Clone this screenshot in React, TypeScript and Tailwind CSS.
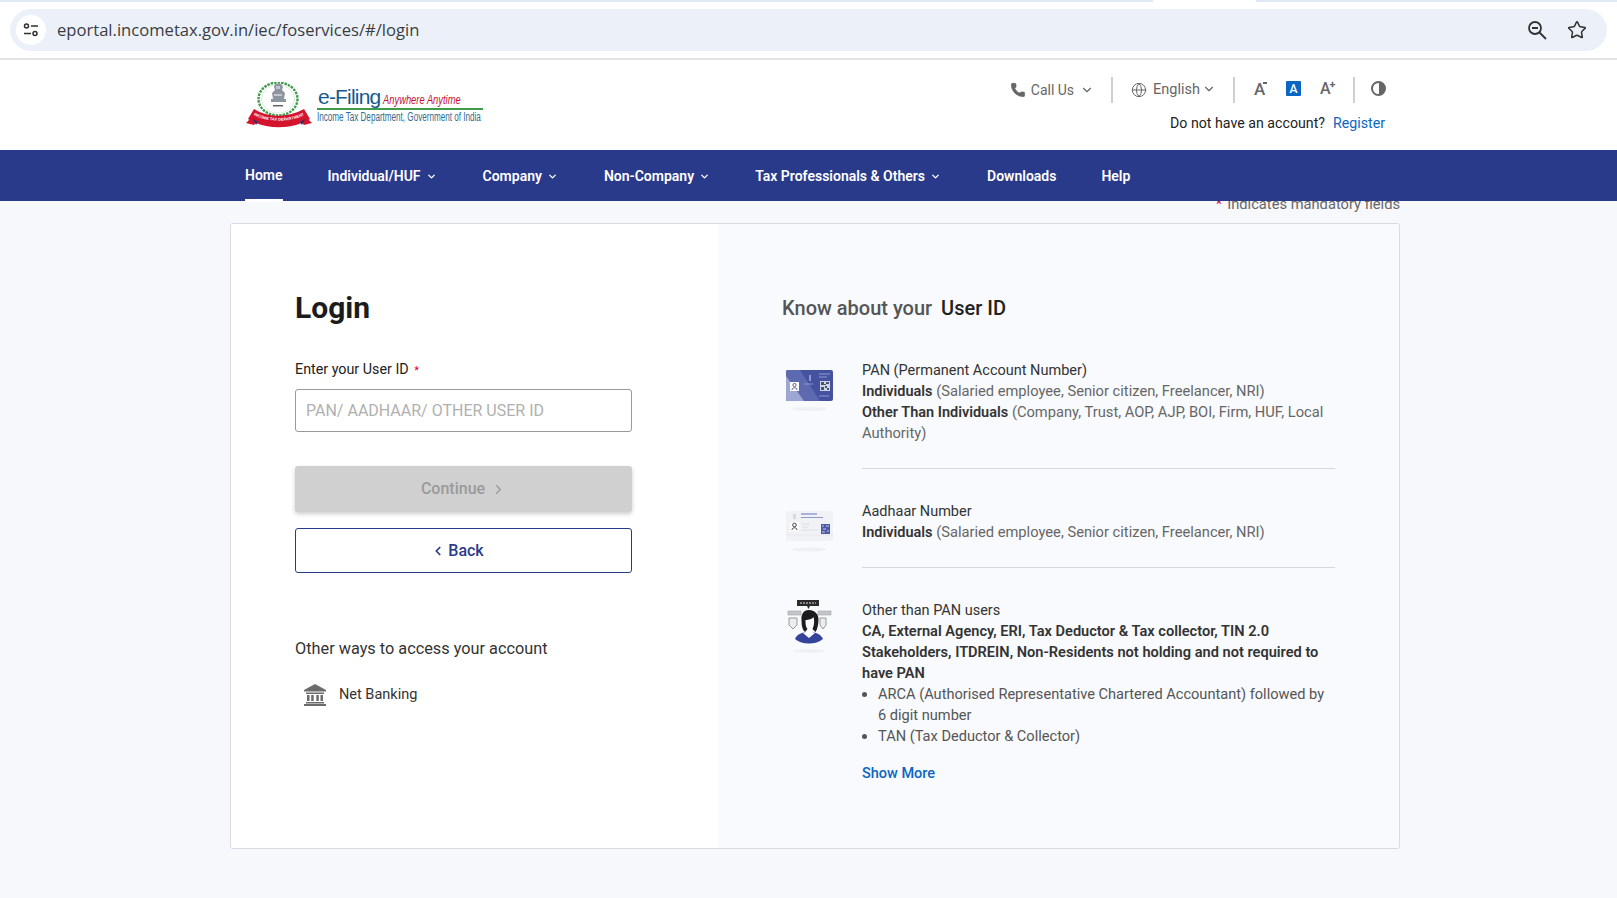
import { ChevronDown, ChevronLeft, ChevronRight, Globe, Phone, Star } from "lucide-react";

const NAV = [
  { label: "Home", active: true, cls: "ml-[245px]" },
  { label: "Individual/HUF", menu: true, cls: "ml-[45px]" },
  { label: "Company", menu: true, cls: "ml-[46px]" },
  { label: "Non-Company", menu: true, cls: "ml-[46px]" },
  { label: "Tax Professionals & Others", menu: true, cls: "ml-[45px]" },
  { label: "Downloads", cls: "ml-[46px]" },
  { label: "Help", cls: "ml-[45px]" },
];

function Emblem() {
  return (
    <svg width="66" height="46" viewBox="0 0 66 46">
      <ellipse cx="32" cy="17" rx="19.500" ry="16.500" fill="none" stroke="#3f9a4a" strokeWidth="2.400" strokeDasharray="2.500 1" />
      <ellipse cx="32" cy="17" rx="16.500" ry="14" fill="none" stroke="#bfe0c4" strokeWidth="0.600" />
      <path d="M29 2h6l2 3-1 3 3 3-1 6h2v3H25v-3h2l-1-6 3-3-1-3z" fill="#8d96a0" />
      <path d="M30 4h4v3h-4zM28 12h8v2h-8z" fill="#c3c8ce" />
      <path d="M27 23h10v1.500H27z" fill="#666" />
      <path d="M8 27c14 9 34 9 50 0l6 10c-18 11-44 11-62 0z" fill="#d4142d" />
      <path d="M0 41l6-6 5 4-3 4zM66 41l-6-6-5 4 3 4z" fill="#d4142d" />
      <path d="M7 37l5 3-2 3zM59 37l-5 3 2 3z" fill="#2d2f6d" />
      <path id="ribbon" d="M6 32c14 9 40 9 54 0" fill="none" />
      <text fontSize="3.900" fontWeight="700" fill="#fff" fontFamily="Liberation Sans, sans-serif" textAnchor="middle">
        <textPath href="#ribbon" startOffset="50%">INCOME TAX DEPARTMENT</textPath>
      </text>
    </svg>
  );
}

function Logo() {
  return (
    <div className="flex items-start">
      <Emblem />
      <div className="ml-[5px] w-[166px]">
        <div className="flex h-[26px] items-end pl-[1px] font-['Liberation_Sans',sans-serif] whitespace-nowrap">
          <span className="-mb-[2px] text-[21px] leading-[26px] tracking-[-0.8px] text-[#155a8f]">e-Filing</span>
          <span className="ml-[3px] -mb-[3px] origin-left scale-x-[0.72] text-[13px] leading-[23px] italic text-[#c8102e]">Anywhere Anytime</span>
        </div>
        <div className="relative h-[2px] bg-[#3f9a4a]"></div>
        <div className="h-[16px] origin-left -mt-[1px] scale-x-[0.675] whitespace-nowrap font-['Liberation_Sans',sans-serif] text-[12px] leading-[16px] text-[#2f6c8f]">
          Income Tax Department, Government of India
        </div>
      </div>
    </div>
  );
}

function PanCard() {
  return (
    <svg width="47" height="42" viewBox="0 0 47 42">
      <rect x="0" y="0" width="47" height="31" rx="2" fill="#44529f" />
      <path d="M2 0h12l20 31H2a2 2 0 0 1-2-2V2a2 2 0 0 1 2-2z" fill="#5e6ab0" />
      <path d="M0 6l18 25H2a2 2 0 0 1-2-2z" fill="#9ea6d4" />
      <rect x="4" y="12" width="9" height="9" fill="#fff" />
      <circle cx="8.500" cy="15" r="1.600" fill="none" stroke="#333a6b" strokeWidth="0.800" />
      <path d="M6 20c0-3 5-3 5 0" fill="none" stroke="#333a6b" strokeWidth="0.800" />
      <rect x="34" y="11" width="10" height="10" fill="#cfd3e6" />
      <path d="M35 12h3v3h-3zM40 12h3v2h-3zM35 17h3v3h-3zM39 16h2v2h-2zM41 18h2v2h-2zM38 14h2v1h-2z" fill="#4a5272" />
      <path d="M33 4h11M33 7h8M33 26h10M18 14h9" stroke="#8f98d2" />
      <path d="M23 5h2v6h-2z" fill="#8f98d2" />
      <ellipse cx="23.500" cy="39" rx="17" ry="2" fill="#eef0f4" />
    </svg>
  );
}

function AadhaarCard() {
  return (
    <svg width="47" height="42" viewBox="0 0 47 42">
      <rect x="0" y="0" width="47" height="30" rx="2" fill="#f1f2f6" />
      <path d="M0 24h47" stroke="#e6e7ec" />
      <rect x="4" y="11" width="9" height="9" fill="#fff" />
      <circle cx="8.500" cy="14" r="1.800" fill="none" stroke="#444" />
      <path d="M6 19c0-3 5-3 5 0" fill="none" stroke="#444" />
      <path d="M15 3h16" stroke="#7c85c4" strokeWidth="1.200" />
      <path d="M15 6.500h22" stroke="#8f97cf" />
      <path d="M16 13h8M16 16h6M16 19h16" stroke="#dcdee6" />
      <rect x="35" y="13" width="9" height="10" fill="#4d5aa6" />
      <path d="M36 15h2M40 15h3M37 18h3M41 20h2M36 21h3" stroke="#c6cbe8" />
      <rect x="7" y="3" width="3" height="5" fill="#d6d8df" />
      <ellipse cx="23.500" cy="38.500" rx="17" ry="2" fill="#eef0f4" />
    </svg>
  );
}

function PersonIcon() {
  return (
    <svg width="47" height="53" viewBox="0 0 47 53">
      <rect x="11" y="0" width="22" height="6" fill="#2b2b2b" />
      <path d="M14 3h16" stroke="#ddd" strokeDasharray="2 1" />
      <path d="M21 6l1.500 3 1.500-3z" fill="#2b2b2b" />
      <rect x="2" y="11" width="13" height="4" fill="#c4c6ca" stroke="#999" strokeWidth="0.500" />
      <rect x="32" y="11" width="13" height="4" fill="#c4c6ca" stroke="#999" strokeWidth="0.500" />
      <path d="M3 18h8v7l-4 4-4-4zM34 18h6v7l-3 4-3-4z" fill="#eceded" stroke="#9a9a9a" />
      <path d="M9 39c2-5 7-6 11-7h6c4 1 9 2 11 7-7 6-21 6-28 0z" fill="#35449b" />
      <path d="M20 28h6v4l3 1-6 5-6-5 3-1z" fill="#fff" />
      <path d="M23 10c-6 0-8 5-7.500 10 0 6 1 10 3.500 12l2.500-3c-2-2-2-6-2-9 3 0 7-1 8-3 1 3 1 8-1 12l3 3c2-3 3-8 3-13 0-5-4-9-9.500-9z" fill="#1c1c1c" />
      <ellipse cx="23" cy="51" rx="16" ry="1.800" fill="#eef0f4" />
    </svg>
  );
}

function BankIcon() {
  return (
    <svg width="22" height="22" viewBox="0 0 22 22" fill="#6b6b6b">
      <path d="M11 0L0 6v1.500h22V6z" />
      <path d="M2 8.500h18v1.500H2zM3 11h2.500v6H3zM7.200 11h2.500v6H7.200zM12.300 11h2.500v6h-2.500zM16.500 11H19v6h-2.500zM2 18h18v1.500H2zM0 20h22v2H0z" />
    </svg>
  );
}

export default function App() {
  return (
    <div className="h-[898px] overflow-hidden bg-[#f6f8fc] font-['Roboto',sans-serif]">
      {/* BROWSER BAR */}
      <div className="h-[60px] border-b-2 border-[#e3e3e3] bg-white">
        <div className="flex h-[2px] bg-[#dfe9f6]">
          <div className="ml-[1153px] w-[103px] bg-white"></div>
        </div>
        <div className="mx-[10px] mt-[7px] flex h-[42px] w-[1597px] items-center rounded-full bg-[#ecf1f9] pl-[6px] pr-[20px]">
          <div className="flex h-[30px] w-[30px] items-center justify-center rounded-full bg-white">
            <svg width="16" height="14" viewBox="0 0 16 14" fill="none" stroke="#303030" strokeWidth="1.500">
              <circle cx="3.500" cy="3" r="2" />
              <path d="M8 3h7M1 10.500h7" />
              <circle cx="12" cy="10.500" r="2" />
            </svg>
          </div>
          <span className="ml-[11px] font-['Open_Sans',sans-serif] text-[16.600px] text-[#3a3d42]">eportal.incometax.gov.in/iec/foservices/#/login</span>
          <div className="ml-auto flex items-center gap-[20px]">
            <svg width="20" height="20" viewBox="0 0 20 20" fill="none" stroke="#333" strokeWidth="1.800">
              <circle cx="8" cy="8" r="6" />
              <path d="M12.500 12.500L19 19M5 8h6" />
            </svg>
            <Star size={20} color="#333" strokeWidth={1.800} />
          </div>
        </div>
      </div>

      {/* HEADER */}
      <div className="flex h-[90px] bg-white pt-[22px]">
        <div className="ml-[246px]">
          <Logo />
        </div>
        <div className="ml-auto mr-[231px] -mt-[5px] flex flex-col items-end">
          <div className="flex h-[26px] items-center text-[#666]">
            <Phone size={16} fill="#666" strokeWidth={1} />
            <span className="ml-[5px] text-[14px]">Call Us</span>
            <ChevronDown size={14} className="ml-[6px]" />
            <div className="ml-[17px] h-[26px] w-[2px] bg-[#cfcfcf]"></div>
            <Globe size={16} strokeWidth={1.500} className="ml-[18px]" />
            <span className="ml-[6px] text-[14.500px]">English</span>
            <ChevronDown size={14} className="ml-[2px] -mt-[3px]" />
            <div className="ml-[17px] h-[26px] w-[2px] bg-[#cfcfcf]"></div>
            <div className="ml-[19px] -mt-[3px] flex h-[16px] w-[15px] items-start text-[17px] font-medium leading-[16px]">A<span className="-ml-[2px] mt-[1px] h-[2px] w-[4px] shrink-0 bg-[#666]"></span></div>
            <div className="ml-[17px] -mt-[3px] flex h-[15px] w-[15px] items-center justify-center rounded-[1px] bg-[#0b66c3] text-[12px] font-medium text-white">A</div>
            <div className="ml-[19px] -mt-[3px] flex h-[16px] w-[16px] items-start text-[16px] font-medium leading-[16px]">A<span className="-ml-[1px] -mt-[2px] text-[11px] font-bold leading-[12px]">+</span></div>
            <div className="ml-[17px] h-[26px] w-[2px] bg-[#cfcfcf]"></div>
            <div className="ml-[16px] -mt-[3px] h-[15px] w-[15px] rounded-full border-2 border-[#666] bg-[linear-gradient(90deg,#fff_50%,#666_50%)]"></div>
          </div>
          <div className="mr-[1px] mt-[10px] flex text-[14.200px]">
            <span className="text-[#222]">Do not have an account?</span>
            <span className="ml-[8px] text-[#0b66c3]">Register</span>
          </div>
        </div>
      </div>

      {/* NAV */}
      <div className="relative z-10 flex h-[51px] bg-[#2a3a8a] pt-[1px] text-white">
        {NAV.map((item) => (
          <div key={item.label} className={`relative flex h-full items-center text-[14px] font-semibold ${item.cls}`}>
            <span className={item.active ? "-mt-[2px]" : ""}>{item.label}</span>
            {item.menu && <ChevronDown size={11} strokeWidth={3} className="ml-[5px]" />}
            {item.active && <div className="absolute -bottom-[1px] left-0 h-[3px] w-full bg-white"></div>}
          </div>
        ))}
      </div>

      {/* MAIN */}
      <div className="ml-[230px] w-[1170px]">
        <div className="-mt-[7px] flex h-[29px] items-start justify-end text-[14.700px] leading-[20px] text-[#666]">
          <span className="mr-[5px] text-[#c8102e]">*</span> Indicates mandatory fields
        </div>
        <div className="flex h-[626px] overflow-hidden rounded-[3px] border border-[#d8dbe3]">
          <div className="w-[487px] bg-white pl-[64px] pt-[66px]">
            <h1 className="text-[30px] font-bold leading-[36px] text-[#1c1c1c]">Login</h1>
            <div className="mt-[33px] text-[14.300px] leading-[20px] text-[#222]">
              Enter your User ID <span className="ml-[2px] text-[11px] text-[#c8102e]">*</span>
            </div>
            <div className="mt-[8px] flex h-[43px] w-[337px] items-center rounded-[3px] border border-[#9a9a9a] pl-[10px] text-[16px] text-[#b0b0b0]">
              PAN/ AADHAAR/ OTHER USER ID
            </div>
            <div className="mt-[34px] flex h-[46px] w-[337px] items-center justify-center rounded-[3px] bg-[#d0d0d0] text-[16px] font-medium text-[#9a9a9a] shadow-[0_2px_4px_rgba(0,0,0,0.2)]">
              Continue
              <ChevronRight size={15} className="ml-[6px]" />
            </div>
            <div className="mt-[16px] flex h-[45px] w-[337px] items-center justify-center rounded-[3px] border border-[#2a3a8a] pr-[12px] text-[16px] font-medium text-[#2a3a8a]">
              <ChevronLeft size={14} strokeWidth={3} className="mr-[3px]" />
              Back
            </div>
            <div className="mt-[65px] text-[16.300px] leading-[22px] text-[#333]">Other ways to access your account</div>
            <div className="mt-[24px] flex items-center pl-[9px]">
              <BankIcon />
              <span className="ml-[13px] text-[14.500px] text-[#333]">Net Banking</span>
            </div>
          </div>
          <div className="flex-1 bg-[#f8fafd] pl-[64px] pr-[64px] pt-[70px]">
            <h2 className="text-[20px] font-medium leading-[28px] text-[#555]">
              Know about your <span className="ml-[4px] text-[#222]">User ID</span>
            </h2>
            <div className="mt-[38px] flex text-[14.700px] leading-[21px] text-[#666]">
              <div className="w-[80px] shrink-0 pl-[4px] pt-[10px]"><PanCard /></div>
              <div className="flex-1 border-b border-[#d5d8de] pb-[24px]">
                <div className="text-[14.500px] text-[#333]">PAN (Permanent Account Number)</div>
                <div><b className="text-[14.500px] font-semibold text-[#333]">Individuals</b> (Salaried employee, Senior citizen, Freelancer, NRI)</div>
                <div><b className="text-[14.500px] font-semibold text-[#333]">Other Than Individuals</b> (Company, Trust, AOP, AJP, BOI, Firm, HUF, Local Authority)</div>
              </div>
            </div>
            <div className="mt-[32px] flex text-[14.700px] leading-[21px] text-[#666]">
              <div className="w-[80px] shrink-0 pl-[4px] pt-[10px]"><AadhaarCard /></div>
              <div className="flex-1 border-b border-[#d5d8de] pb-[24px]">
                <div className="text-[14.500px] text-[#333]">Aadhaar Number</div>
                <div><b className="text-[14.500px] font-semibold text-[#333]">Individuals</b> (Salaried employee, Senior citizen, Freelancer, NRI)</div>
              </div>
            </div>
            <div className="mt-[32px] flex text-[14.700px] leading-[21px] text-[#666]">
              <div className="w-[80px] shrink-0 pl-[4px]"><PersonIcon /></div>
              <div className="flex-1">
                <div className="text-[14.500px] text-[#333]">Other than PAN users</div>
                <div className="text-[14.600px] font-semibold text-[#333]">CA, External Agency, ERI, Tax Deductor &amp; Tax collector, TIN 2.0 Stakeholders, ITDREIN, Non-Residents not holding and not required to have PAN</div>
                <ul className="list-disc pl-[16px] text-[14.600px] text-[#555]">
                  <li>ARCA (Authorised Representative Chartered Accountant) followed by 6 digit number</li>
                  <li>TAN (Tax Deductor &amp; Collector)</li>
                </ul>
                <div className="mt-[16px] text-[14.500px] font-medium text-[#0b66c3]">Show More</div>
              </div>
            </div>
          </div>
        </div>
      </div>
    </div>
  );
}
